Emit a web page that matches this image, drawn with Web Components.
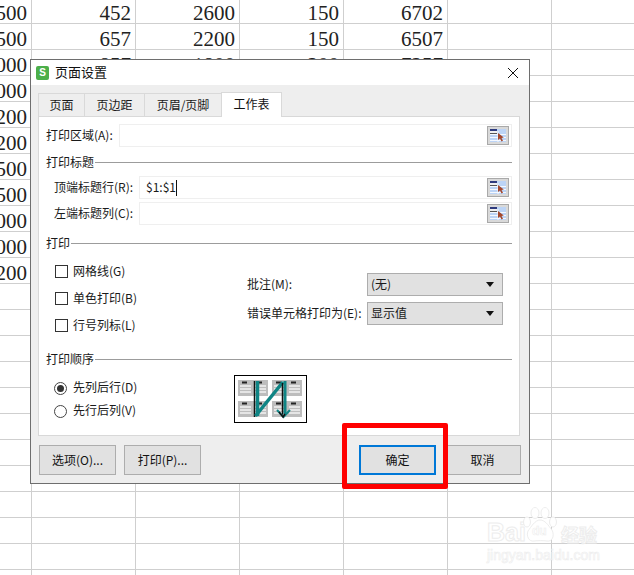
<!DOCTYPE html>
<html lang="zh">
<head>
<meta charset="utf-8">
<title>页面设置</title>
<style>
  html, body { margin: 0; height: 100%; overflow: hidden; background: #fff; }
  body { font: 12px "Noto Sans CJK SC", "Liberation Sans", sans-serif; color: #1a1a1a; }
</style>
</head>
<body>
<x-sheet></x-sheet>

<x-dialog heading="页面设置">
  <x-tabs slot="tabs">
    <x-tab w="47">页面</x-tab>
    <x-tab w="61">页边距</x-tab>
    <x-tab w="78">页眉/页脚</x-tab>
    <x-tab w="61" active>工作表</x-tab>
  </x-tabs>

  <x-field label="打印区域(A):"></x-field>
  <x-group-title style="margin-top:7px">打印标题</x-group-title>
  <x-field label="顶端标题行(R):" indent value="$1:$1" style="margin-top:6px"></x-field>
  <x-field label="左端标题列(C):" indent style="margin-top:3px"></x-field>
  <x-group-title style="margin-top:10px">打印</x-group-title>
  <x-print-opts>
    <x-check slot="checks">网格线(G)</x-check>
    <x-check slot="checks">单色打印(B)</x-check>
    <x-check slot="checks">行号列标(L)</x-check>
    <x-select slot="selects" label="批注(M):">(无)</x-select>
    <x-select slot="selects" label="错误单元格打印为(E):">显示值</x-select>
  </x-print-opts>
  <x-group-title>打印顺序</x-group-title>
  <x-print-order>
    <x-radio checked>先列后行(D)</x-radio>
    <x-radio>先行后列(V)</x-radio>
  </x-print-order>

  <x-button slot="left">选项(O)...</x-button>
  <x-button slot="left">打印(P)...</x-button>
  <x-button slot="right" primary>确定</x-button>
  <x-button slot="right">取消</x-button>
</x-dialog>

<x-highlight></x-highlight>
<x-watermark></x-watermark>

<script>
// worksheet behind the dialog
const SHEET_ROWS = [
  ["500", "452", "2600", "150", "6702"],
  ["500", "657", "2200", "150", "6507"],
  ["000", "857", "1800", "200", "7257"],
  ["000"], ["200"], ["200"], ["500"], ["500"], ["000"], ["000"], ["200"]
];

class XSheet extends HTMLElement {
  connectedCallback() {
    let cells = "";
    for (let r = 0; r < 23; r++) {
      for (let c = 0; c < 7; c++) {
        const v = (SHEET_ROWS[r] || [])[c] || "";
        cells += `<div class="${c == 6 ? "last" : ""}">${v}</div>`;
      }
    }
    this.attachShadow({ mode: "open" }).innerHTML = `
    <style>
      :host { display: block; height: 575px; overflow: hidden; }
      .grid {
        display: grid;
        grid-template-columns: 32px repeat(5, 104px) 1fr;
        grid-template-rows: 24px;
        grid-auto-rows: 26px;
        font: 21px/20px "Liberation Serif", serif;
        color: #222;
      }
      .grid div {
        box-sizing: border-box;
        border-right: 1px solid #cfcfcf;
        border-bottom: 1px solid #cfcfcf;
        padding-right: 4px;
        display: flex; align-items: flex-end; justify-content: flex-end;
      }
      .grid div.last { border-right: 0; }
    </style>
    <div class="grid">${cells}</div>`;
  }
}

class XDialog extends HTMLElement {
  connectedCallback() {
    this.attachShadow({ mode: "open" }).innerHTML = `
    <style>
      :host {
        position: absolute; left: 30px; top: 59px;
        box-sizing: border-box; width: 500px; height: 425px;
        border: 1px solid #6e6e6e; background: #eee;
        display: flex; flex-direction: column;
      }
      .title {
        height: 25px; background: #fff; flex: none;
        display: flex; align-items: center; padding: 0 10px 0 5px;
        font-size: 13px; color: #111;
      }
      .logo {
        width: 13px; height: 14px; border-radius: 2px; background: #4caf4a;
        color: #fff; font: bold 10px/14px "Liberation Sans", sans-serif;
        text-align: center; margin-right: 6px;
      }
      .title span { flex: 1; padding-bottom: 2px; }
      .title svg { display: block; }
      .body { flex: 1; display: flex; flex-direction: column; padding: 7px 9px 0 7px; min-height: 0; }
      .panel {
        flex: 1; margin-top: -1px; background: #fff;
        border: 1px solid #d8d8d8;
        padding: 7px 7px 0;
      }
      .foot {
        flex: none; height: 47px; box-sizing: border-box;
        padding: 9px 8px 0 8px;
        display: flex; justify-content: space-between;
      }
      .foot div { display: flex; gap: 8px; }
    </style>
    <div class="title">
      <div class="logo">S</div>
      <span>${this.getAttribute("heading")}</span>
      <svg width="12" height="12" viewBox="0 0 12 12"><path d="M1 1l10 10M11 1L1 11" stroke="#111" stroke-width="1" fill="none"/></svg>
    </div>
    <div class="body">
      <slot name="tabs"></slot>
      <div class="panel"><slot></slot></div>
    </div>
    <div class="foot">
      <div><slot name="left"></slot></div>
      <div><slot name="right"></slot></div>
    </div>`;
  }
}

class XTabs extends HTMLElement {
  connectedCallback() {
    this.attachShadow({ mode: "open" }).innerHTML = `
    <style>
      :host { display: flex; align-items: flex-end; height: 25px; padding-left: 1px; flex: none; position: relative; z-index: 1; }
    </style>
    <slot></slot>`;
  }
}

class XTab extends HTMLElement {
  connectedCallback() {
    const w = this.getAttribute("w") || 46;
    this.attachShadow({ mode: "open" }).innerHTML = `
    <style>
      :host {
        box-sizing: border-box; width: ${w}px; height: 24px;
        display: flex; align-items: center; justify-content: center;
        border: 1px solid #d9d9d9; margin-left: -1px;
        padding-bottom: 2px; background: #eee; color: #1a1a1a;
      }
      :host([active]) {
        height: 25px; background: #fff; border-bottom: 0; color: #111; padding-bottom: 3px;
      }
    </style>
    <slot></slot>`;
  }
}

class XGroupTitle extends HTMLElement {
  connectedCallback() {
    this.attachShadow({ mode: "open" }).innerHTML = `
    <style>
      :host { display: flex; align-items: center; height: 16px; gap: 1px; }
      span { padding-bottom: 2px; }
      i { flex: 1; height: 1px; background: #9c9c9c; }
    </style>
    <span><slot></slot></span><i></i>`;
  }
}

class XRangeBtn extends HTMLElement {
  connectedCallback() {
    this.attachShadow({ mode: "open" }).innerHTML = `
    <style>
      :host { display: block; width: 22px; height: 19px; }
      svg { display: block; }
    </style>
    <svg width="22" height="19" viewBox="0 0 22 19">
      <rect x=".5" y=".5" width="21" height="18" fill="#d9d9d9" stroke="#a9a9a9"/>
      <rect x="3" y="3" width="16" height="13" fill="#bcd4f6"/>
      <path d="M3 8.500h16M3 11.500h16M11 5v11M3 14.500h16" stroke="#f4f8ff" stroke-width="1" fill="none"/>
      <rect x="3" y="3" width="7" height="5" fill="#f0f0f0"/>
      <rect x="3" y="3" width="7" height="2" fill="#2e3a7e"/>
      <path d="M3 7.500h7" stroke="#555" stroke-width="1"/>
      <path d="M11 7l0 7 2-1.500 1.500 3 1.500-.8-1.500-2.700 2.300-.4z" fill="#a3482e"/>
    </svg>`;
  }
}

class XField extends HTMLElement {
  connectedCallback() {
    const value = this.getAttribute("value");
    this.attachShadow({ mode: "open" }).innerHTML = `
    <style>
      :host { display: flex; align-items: center; height: 23px; }
      :host([indent]) { padding-left: 8px; }
      .lab { white-space: nowrap; width: 73px; padding-bottom: 2px; }
      :host([indent]) .lab { width: 85px; }
      .box {
        flex: 1; height: 100%; box-sizing: border-box; border: 1px solid #efefef;
        display: flex; align-items: center; padding: 0 2px 0 6px;
      }
      .val { flex: 1; font-size: 12px; color: #1a1a1a; padding-bottom: 2px; }
      .val b { display: inline-block; width: 1px; height: 16px; background: #111; vertical-align: -4px; }
    </style>
    <div class="lab">${this.getAttribute("label")}</div>
    <div class="box">
      <div class="val">${value ? value + "<b></b>" : ""}</div>
      <x-range-btn></x-range-btn>
    </div>`;
  }
}

class XPrintOpts extends HTMLElement {
  connectedCallback() {
    this.attachShadow({ mode: "open" }).innerHTML = `
    <style>
      :host { display: flex; height: 100px; }
      .l { width: 201px; box-sizing: border-box; padding: 14px 0 0 9px; display: flex; flex-direction: column; gap: 14px; }
      .r { display: flex; flex-direction: column; gap: 6px; padding-top: 22px; }
    </style>
    <div class="l"><slot name="checks"></slot></div>
    <div class="r"><slot name="selects"></slot></div>`;
  }
}

class XCheck extends HTMLElement {
  connectedCallback() {
    this.attachShadow({ mode: "open" }).innerHTML = `
    <style>
      :host { display: flex; align-items: center; height: 13px; gap: 5px; white-space: nowrap; }
      i { width: 13px; height: 13px; box-sizing: border-box; border: 1px solid #333; background: #fff; flex: none; }
      span { padding-bottom: 2px; }
    </style>
    <i></i><span><slot></slot></span>`;
  }
}

class XSelect extends HTMLElement {
  connectedCallback() {
    this.attachShadow({ mode: "open" }).innerHTML = `
    <style>
      :host { display: flex; align-items: center; height: 23px; }
      .lab { width: 120px; white-space: nowrap; padding-bottom: 2px; }
      .box {
        width: 136px; height: 100%; box-sizing: border-box;
        background: #e1e1e1; border: 1px solid #adadad;
        display: flex; align-items: center; justify-content: space-between;
        padding: 0 8px 0 3px;
      }
      .box span { padding-bottom: 2px; }
      .box i { width: 0; height: 0; border: 4px solid transparent; border-top: 5px solid #111; border-bottom: 0; }
    </style>
    <div class="lab">${this.getAttribute("label")}</div>
    <div class="box"><span><slot></slot></span><i></i></div>`;
  }
}

class XPrintOrder extends HTMLElement {
  connectedCallback() {
    this.attachShadow({ mode: "open" }).innerHTML = `
    <style>
      :host { display: flex; }
      .l { width: 188px; box-sizing: border-box; padding: 10px 0 0 8px; }
      svg { display: block; margin-top: 8px; }
    </style>
    <div class="l"><slot></slot></div>
    <svg width="73" height="48" viewBox="0 0 73 48">
      <defs>
        <g id="mini">
          <rect width="30" height="16" fill="#bdbdbd"/>
          <path d="M2 6h11M2 9h11M2 12h11M17 6h11M17 9h11M17 12h11" stroke="#f2f2f2" stroke-width="1.500"/>
          <path d="M4 2.500h5M19 2.500h5" stroke="#222" stroke-width="2"/>
        </g>
      </defs>
      <rect x=".5" y=".5" width="72" height="47" fill="#fff" stroke="#000"/>
      <use href="#mini" x="4" y="5"/>
      <use href="#mini" x="38" y="5"/>
      <use href="#mini" x="4" y="26"/>
      <use href="#mini" x="38" y="26"/>
      <path d="M20.500 6v36" stroke="#111" stroke-width="1.500"/>
      <path d="M23.500 6v35" stroke="#0f8585" stroke-width="3.500"/>
      <path d="M21.500 41L49 7" stroke="#0f8585" stroke-width="3.500"/>
      <path d="M51 6v33" stroke="#0f8585" stroke-width="3"/>
      <path d="M48.500 8v32" stroke="#111" stroke-width="1.500"/>
      <path d="M43 35l6.500 7 6.500-7" stroke="#0f8585" stroke-width="2" fill="none"/>
      <path d="M45 37l4 5 2-3" stroke="#111" stroke-width="1.500" fill="none"/>
    </svg>`;
  }
}

class XRadio extends HTMLElement {
  connectedCallback() {
    this.attachShadow({ mode: "open" }).innerHTML = `
    <style>
      :host { display: flex; align-items: center; height: 23px; gap: 6px; white-space: nowrap; }
      i { width: 13px; height: 13px; box-sizing: border-box; border: 1px solid #444; border-radius: 50%; display: flex; align-items: center; justify-content: center; flex: none; }
      :host([checked]) i::after { content: ""; width: 7px; height: 7px; border-radius: 50%; background: #333; }
      span { padding-bottom: 4px; }
    </style>
    <i></i><span><slot></slot></span>`;
  }
}

class XButton extends HTMLElement {
  connectedCallback() {
    this.attachShadow({ mode: "open" }).innerHTML = `
    <style>
      :host {
        box-sizing: border-box; width: 77px; height: 30px;
        display: flex; align-items: center; justify-content: center;
        background: #e1e1e1; border: 1px solid #adadad; color: #111;
        padding-bottom: 2px;
      }
      :host([primary]) { border: 2px solid #0078d7; }
    </style>
    <slot></slot>`;
  }
}

class XHighlight extends HTMLElement {
  connectedCallback() {
    this.attachShadow({ mode: "open" }).innerHTML = `
    <style>
      :host {
        position: absolute; left: 342px; top: 423px; width: 106px; height: 66px;
        box-sizing: border-box; border: 5px solid #f00; border-radius: 2px;
      }
    </style>`;
  }
}

class XWatermark extends HTMLElement {
  connectedCallback() {
    this.attachShadow({ mode: "open" }).innerHTML = `
    <style>
      :host { position: absolute; left: 487px; top: 507px; width: 114px; color: rgba(255,255,255,.6); }
      .top { display: flex; align-items: flex-end; height: 37px; font: bold 25px/24px "Liberation Sans", sans-serif; -webkit-text-stroke: 1px #ededed; }
      .cn { font: bold 18px/20px "Noto Sans CJK SC", sans-serif; }
      .du { width: 35px; }
      svg { position: absolute; left: 35px; top: 0; }
      svg text { font: bold 12px "Liberation Sans", sans-serif; fill: #fff; stroke: #ededed; stroke-width: .6; }
      .url { font: 14px/14px "Liberation Sans", sans-serif; -webkit-text-stroke: .6px #ededed; margin-top: 4px; white-space: nowrap; }
    </style>
    <svg width="38" height="38" viewBox="0 0 38 38" fill="#fff" stroke="#ededed">
      <ellipse cx="5" cy="15" rx="3.500" ry="5"/>
      <ellipse cx="13" cy="6" rx="4" ry="5.500"/>
      <ellipse cx="23" cy="6" rx="4" ry="5.500"/>
      <ellipse cx="31" cy="15" rx="3.500" ry="5"/>
      <path d="M18 13c5 0 8 5 12 10 3 6 0 12-5 11-4-.5-9-.5-13 0-5 1-8-5-6-10 3-4 7-11 12-11z"/>
      <text x="10" y="28">du</text>
    </svg>
    <div class="top"><span>Bai</span><span class="du"></span><span class="cn">经验</span></div>
    <div class="url">jingyan.baidu.com</div>`;
  }
}

customElements.define("x-sheet", XSheet);
customElements.define("x-dialog", XDialog);
customElements.define("x-tabs", XTabs);
customElements.define("x-tab", XTab);
customElements.define("x-group-title", XGroupTitle);
customElements.define("x-range-btn", XRangeBtn);
customElements.define("x-field", XField);
customElements.define("x-print-opts", XPrintOpts);
customElements.define("x-check", XCheck);
customElements.define("x-select", XSelect);
customElements.define("x-print-order", XPrintOrder);
customElements.define("x-radio", XRadio);
customElements.define("x-button", XButton);
customElements.define("x-highlight", XHighlight);
customElements.define("x-watermark", XWatermark);
</script>
</body>
</html>
